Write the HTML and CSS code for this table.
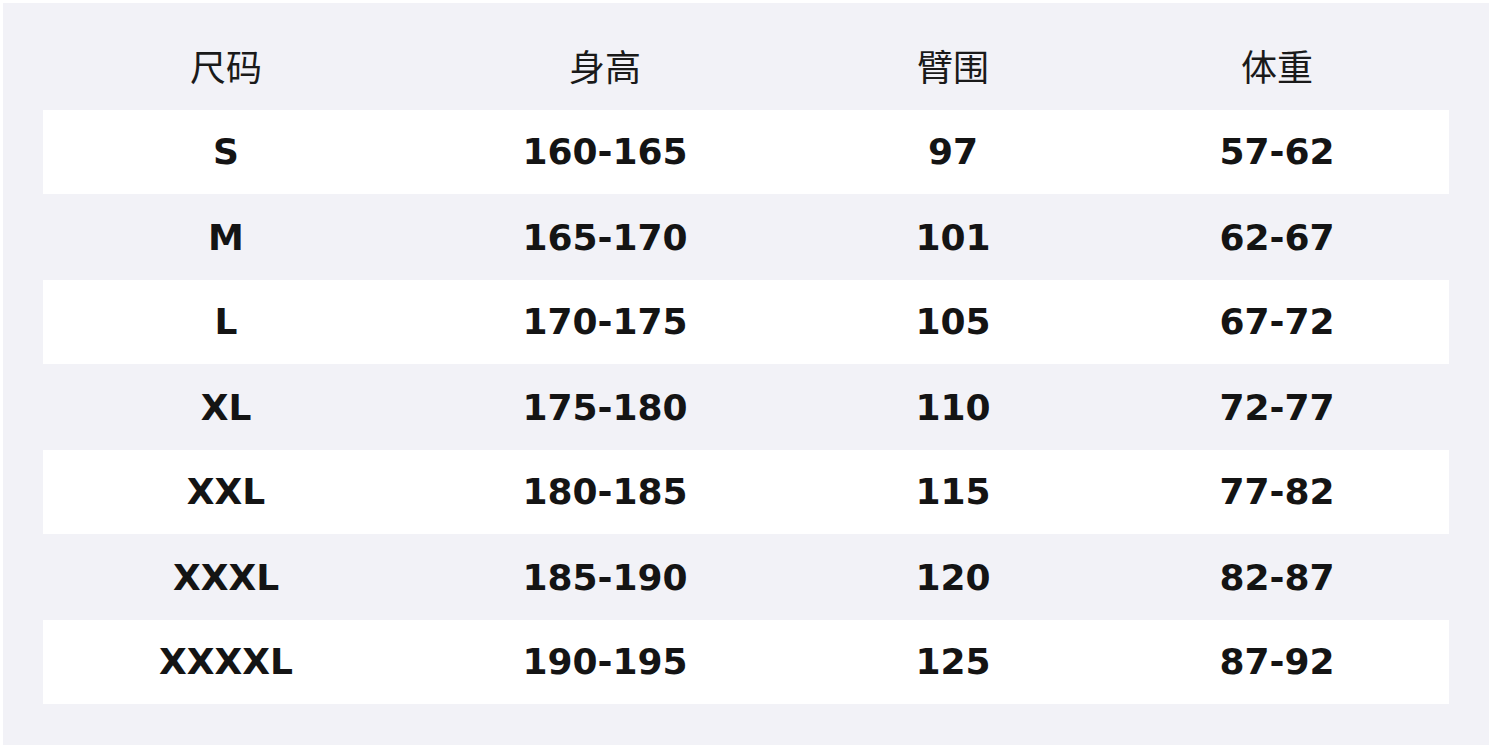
FILE: index.html
```html
<!DOCTYPE html>
<html lang="zh">
<head>
<meta charset="utf-8">
<link rel="stylesheet" href="styles.css">
</head>
<body>
<div class="sheet">
  <table class="size-table">
    <colgroup>
      <col class="c1"><col class="c2"><col class="c3"><col class="c4">
    </colgroup>
    <thead>
      <tr><th>尺码</th><th>身高</th><th>臂围</th><th>体重</th></tr>
    </thead>
    <tbody>
      <tr class="odd"><td>S</td><td>160-165</td><td>97</td><td>57-62</td></tr>
      <tr><td>M</td><td>165-170</td><td>101</td><td>62-67</td></tr>
      <tr class="odd"><td>L</td><td>170-175</td><td>105</td><td>67-72</td></tr>
      <tr><td>XL</td><td>175-180</td><td>110</td><td>72-77</td></tr>
      <tr class="odd"><td>XXL</td><td>180-185</td><td>115</td><td>77-82</td></tr>
      <tr><td>XXXL</td><td>185-190</td><td>120</td><td>82-87</td></tr>
      <tr class="odd"><td>XXXXL</td><td>190-195</td><td>125</td><td>87-92</td></tr>
    </tbody>
  </table>
</div>
</body>
</html>
```
FILE: styles.css
```css
html, body {
  margin: 0;
  padding: 0;
  background: #ffffff;
}
.sheet {
  margin: 3px;
  height: 742px;
  box-sizing: border-box;
  padding: 22px 40px 40px;
  background: #f2f2f7;
}
.size-table {
  width: 1406px;
  border-collapse: collapse;
  table-layout: fixed;
  color: #141414;
}
.c1 { width: 366px; }
.c2 { width: 392px; }
.c3 { width: 304px; }
.c4 { width: 344px; }
.size-table th {
  height: 85px;
  box-sizing: border-box;
  padding: 0 0 6px;
  font-family: "Noto Sans CJK SC", "Noto Sans", sans-serif;
  font-weight: 400;
  font-size: 36px;
  text-align: center;
  vertical-align: middle;
  color: #1a1a1a;
}
.size-table td {
  height: 85px;
  padding: 0;
  box-sizing: border-box;
  font-family: "DejaVu Sans", sans-serif;
  font-weight: 700;
  font-size: 36px;
  text-align: center;
  vertical-align: middle;
  line-height: 1;
}
.size-table tr.odd td {
  background: #ffffff;
  border-bottom: 2px solid #f2f2f7;
}
```
